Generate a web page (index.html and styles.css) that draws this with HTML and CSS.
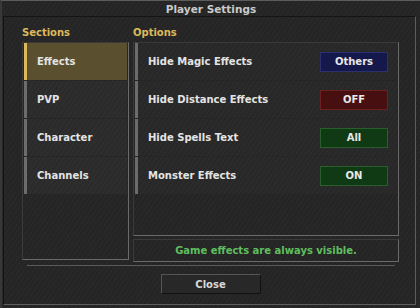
FILE: index.html
```html
<!DOCTYPE html>
<html lang="en">
<head>
  <meta charset="UTF-8" />
  <title>Player Settings</title>
  <link rel="stylesheet" href="styles.css">
</head>
<body>

  <div class="window">
    <div class="titlebar">Player Settings</div>

    <div class="content">
      <div class="columns">
        <div class="col-sections">
          <div class="col-label">Sections</div>
          <div class="panel section-list">
            <div class="section-item active">Effects</div>
            <div class="section-item">PVP</div>
            <div class="section-item">Character</div>
            <div class="section-item">Channels</div>
          </div>
        </div>

        <div class="col-options">
          <div class="col-label">Options</div>
          <div class="panel option-list">
            <div class="option-row">
              <span class="option-name">Hide Magic Effects</span>
              <button class="option-btn blue">Others</button>
            </div>
            <div class="option-row">
              <span class="option-name">Hide Distance Effects</span>
              <button class="option-btn red">OFF</button>
            </div>
            <div class="option-row">
              <span class="option-name">Hide Spells Text</span>
              <button class="option-btn green">All</button>
            </div>
            <div class="option-row">
              <span class="option-name">Monster Effects</span>
              <button class="option-btn green">ON</button>
            </div>
          </div>
          <div class="panel status">Game effects are always visible.</div>
        </div>
      </div>

      <div class="separator"></div>

      <div class="footer">
        <button class="close-btn">Close</button>
      </div>
    </div>
  </div>

</body>
</html>
```

FILE: styles.css
```css
:root {
  --stone: #252525;
  --gold: #dcb95c;
  --text: #e4e4e4;
  --edge-dark: #161616;
  --edge-light: #6a6a6a;
}

body {
  margin: 0;
  background: #1c1c1c;
  font-family: 'DejaVu Sans', Verdana, sans-serif;
  font-weight: bold;
  font-size: 10px;
  color: var(--text);
}

.window {
  width: 420px;
  height: 308px;
  box-sizing: border-box;
  display: flex;
  flex-direction: column;
  background-color: var(--stone);
  background-image: repeating-linear-gradient(125deg, rgba(255,255,255,0.025) 0 1px, transparent 1px 4px);
  border-top: 1px solid #5c5c5c;
  border-left: 2px solid #383838;
}

.titlebar {
  height: 15px;
  line-height: 16px;
  text-align: center;
  color: #cacaca;
  font-size: 10.5px;
}

.content {
  flex: 1;
  margin: 0 4px 3px 1px;
  border-top: 1px solid #141414;
  border-left: 1px solid #141414;
  border-right: 1px solid #5e5e5e;
  border-bottom: 1px solid #5e5e5e;
  display: flex;
  flex-direction: column;
  padding: 8px 16px 0 18px;
}

.columns {
  display: flex;
  gap: 4px;
}

.col-label {
  color: var(--gold);
  height: 13px;
  line-height: 15px;
  margin-bottom: 4px;
}

.col-sections {
  width: 107px;
}

.col-options {
  flex: 1;
  display: flex;
  flex-direction: column;
}

.panel {
  border-top: 1px solid #3a3a3a;
  border-left: 1px solid #3a3a3a;
  border-right: 1px solid var(--edge-light);
  border-bottom: 1px solid var(--edge-light);
  box-sizing: border-box;
}

.section-list {
  height: 218px;
  padding: 0 1px 0 1px;
  display: flex;
  flex-direction: column;
  gap: 1px;
}

.section-item {
  height: 37px;
  line-height: 38px;
  padding-left: 10px;
  background: rgba(255, 255, 255, 0.03);
  border-left: 3px solid #6c6c6c;
}

.section-item.active {
  background: #5a4f2e;
  border-left-color: var(--gold);
}

.option-list {
  height: 194px;
  padding: 0 1px;
  display: flex;
  flex-direction: column;
  gap: 1px;
}

.option-row {
  height: 37px;
  display: flex;
  align-items: center;
  justify-content: space-between;
  padding: 0 9px 0 10px;
  border-left: 3px solid #6c6c6c;
  background: rgba(255, 255, 255, 0.015);
}

.option-btn {
  width: 68px;
  height: 20px;
  padding: 0;
  font: inherit;
  color: #e8e8e8;
  border: 1px solid;
  cursor: pointer;
}

.option-btn.blue {
  background: #15184a;
  border-color: #2c306c;
}

.option-btn.red {
  background: #470f0f;
  border-color: #6c2020;
}

.option-btn.green {
  background: #0f3a14;
  border-color: #2a5e2c;
}

.status {
  margin-top: 3px;
  height: 23px;
  line-height: 21px;
  text-align: center;
  color: #5fbf5f;
}

.separator {
  height: 1px;
  margin: 3px 4px 0 5px;
  background: #5a5a5a;
}

.footer {
  display: flex;
  justify-content: center;
  padding-top: 8px;
}

.close-btn {
  width: 100px;
  height: 20px;
  padding: 0;
  font: inherit;
  color: #d8d8d8;
  background: #282828;
  border-top: 1px solid #555;
  border-left: 1px solid #555;
  border-right: 1px solid #111;
  border-bottom: 1px solid #111;
  cursor: pointer;
}
```
